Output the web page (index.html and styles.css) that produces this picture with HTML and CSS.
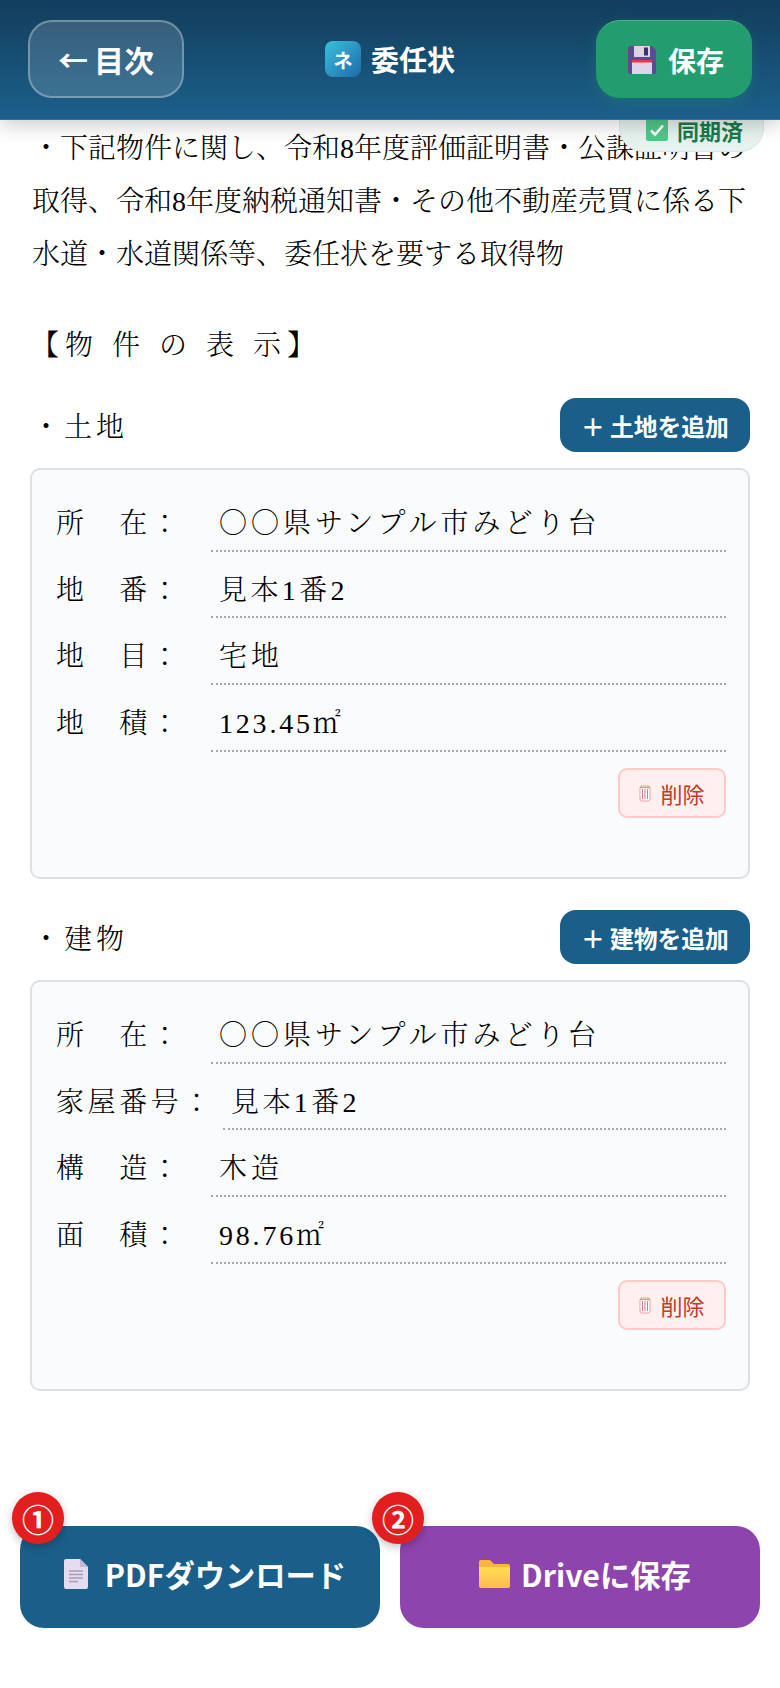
FILE: index.html
```html
<!DOCTYPE html>
<html lang="ja">
<head>
<meta charset="utf-8">
<title>委任状</title>
<link rel="stylesheet" href="styles.css">
</head>
<body>
<header class="topbar">
  <button class="back-btn"><span>←</span>目次</button>
  <div class="title">
    <span class="logo"><svg viewBox="0 0 36 36" width="36" height="36"><defs><linearGradient id="lg" x1="0" y1="0" x2="1" y2="1"><stop offset="0" stop-color="#3cc0dc"/><stop offset="1" stop-color="#1d6aa8"/></linearGradient></defs><rect width="36" height="36" rx="8" fill="url(#lg)"/></svg><span class="logo-mark">ネ</span></span>
    <span>委任状</span>
  </div>
  <button class="save-btn">
    <svg class="floppy" viewBox="0 0 28 28" width="28" height="28"><path d="M2 0h22l4 4v22a2 2 0 0 1-2 2H2a2 2 0 0 1-2-2V2a2 2 0 0 1 2-2z" fill="#5c4a94"/><rect x="6" y="0" width="16" height="11" fill="#d9d4e6"/><rect x="16" y="1.500" width="4" height="8" fill="#3d3268"/><rect x="4" y="14" width="20" height="14" fill="#e0d4ea"/><rect x="4" y="14" width="20" height="2.500" fill="#e8344e"/></svg>
    保存
  </button>
</header>
<div class="sync-badge">
  <svg viewBox="0 0 22 22" width="22" height="22"><rect width="22" height="22" rx="2" fill="#52c78a"/><path d="M5 11.500l4 4 8-9" fill="none" stroke="#fff" stroke-width="2.600"/></svg>
  同期済
</div>
<main class="doc">
  <p class="intro">・下記物件に関し、令和8年度評価証明書・公課証明書の取得、令和8年度納税通知書・その他不動産売買に係る下水道・水道関係等、委任状を要する取得物</p>
  <h2 class="heading">【物 件 の 表 示】</h2>

  <section class="group">
    <div class="group-head">
      <span class="group-name">・土地</span>
      <button class="add-btn"><span class="plus">＋</span>土地を追加</button>
    </div>
    <div class="card">
      <div class="row"><span class="label">所　在：</span><span class="value"><span class="maru">○○</span>県サンプル市みどり台</span></div>
      <div class="row"><span class="label">地　番：</span><span class="value mixed">見本1番2</span></div>
      <div class="row"><span class="label">地　目：</span><span class="value">宅地</span></div>
      <div class="row"><span class="label">地　積：</span><span class="value numeric">123.45㎡</span></div>
      <div class="card-foot">
        <button class="del-btn"><svg viewBox="0 0 12 18" width="12" height="18"><rect x="1" y="2" width="10" height="15" rx="2" fill="#fff" stroke="#e8a0a0"/><path d="M3.500 5v10M6 5v10M8.500 5v10" stroke="#d07a8a"/><path d="M1 3.500h10" stroke="#e0a060" stroke-width="1.500"/></svg>削除</button>
      </div>
    </div>
  </section>

  <section class="group">
    <div class="group-head">
      <span class="group-name">・建物</span>
      <button class="add-btn"><span class="plus">＋</span>建物を追加</button>
    </div>
    <div class="card">
      <div class="row"><span class="label">所　在：</span><span class="value"><span class="maru">○○</span>県サンプル市みどり台</span></div>
      <div class="row"><span class="label">家屋番号：</span><span class="value mixed">見本1番2</span></div>
      <div class="row"><span class="label">構　造：</span><span class="value">木造</span></div>
      <div class="row"><span class="label">面　積：</span><span class="value numeric">98.76㎡</span></div>
      <div class="card-foot">
        <button class="del-btn"><svg viewBox="0 0 12 18" width="12" height="18"><rect x="1" y="2" width="10" height="15" rx="2" fill="#fff" stroke="#e8a0a0"/><path d="M3.500 5v10M6 5v10M8.500 5v10" stroke="#d07a8a"/><path d="M1 3.500h10" stroke="#e0a060" stroke-width="1.500"/></svg>削除</button>
      </div>
    </div>
  </section>
</main>
<footer class="actions">
  <button class="action pdf"><span class="badge badge-one">①</span>
    <svg viewBox="0 0 24 30" width="24" height="30"><path d="M2 0h14l8 8v20a2 2 0 0 1-2 2H2a2 2 0 0 1-2-2V2a2 2 0 0 1 2-2z" fill="#e4ddf0"/><path d="M16 0l8 8h-8z" fill="#c4b9d6"/><path d="M5 12h14M5 15.500h14M5 19h14M5 22.500h9" stroke="#a79db8" stroke-width="1.500"/></svg>
    PDFダウンロード</button>
  <button class="action drive"><span class="badge badge-two">②</span>
    <svg viewBox="0 0 31 28" width="31" height="28"><defs><linearGradient id="fg" x1="0" y1="0" x2="0" y2="1"><stop offset="0" stop-color="#ffdf50"/><stop offset="1" stop-color="#ffb950"/></linearGradient></defs><path d="M2 0h9l4 4h14a2 2 0 0 1 2 2v4H0V2a2 2 0 0 1 2-2z" fill="#ffb53c"/><path d="M0 7h31v19a2 2 0 0 1-2 2H2a2 2 0 0 1-2-2z" fill="url(#fg)"/></svg>
    Driveに保存</button>
</footer>
</body>
</html>
```
FILE: styles.css
```css
* { box-sizing: border-box; }
html, body { margin: 0; padding: 0; background: #fff; }
body {
  position: relative;
  width: 780px;
  height: 1688px;
  overflow: hidden;
  font-family: "Liberation Serif", "Noto Serif CJK JP", "Noto Sans CJK JP", serif;
  font-weight: 300;
  color: #000;
}
button { font-family: "Noto Sans CJK JP", sans-serif; cursor: pointer; }

.topbar {
  position: relative;
  z-index: 3;
  height: 120px;
  padding: 20px 28px 21px 28px;
  display: flex;
  align-items: stretch;
  justify-content: space-between;
  background: linear-gradient(180deg, #123d5c 0%, #1c608b 100%);
  border-bottom: 1px solid #2f6f98;
  box-shadow: 0 4px 20px rgba(0, 0, 0, .22);
}
.back-btn {
  width: 156px;
  padding: 0;
  display: flex;
  align-items: center;
  justify-content: center;
  gap: 6px;
  color: #fff;
  font-size: 30px;
  font-weight: 700;
  background: rgba(255, 255, 255, .15);
  border: 2px solid rgba(255, 255, 255, .3);
  border-radius: 24px;
}
.title {
  display: flex;
  align-items: center;
  gap: 10px;
  color: #fff;
  font-family: "Noto Sans CJK JP", sans-serif;
  font-size: 28px;
  font-weight: 700;
}
.logo { position: relative; display: block; width: 36px; height: 36px; }
.logo svg { display: block; }
.logo-mark {
  position: absolute;
  inset: 0;
  display: flex;
  align-items: center;
  justify-content: center;
  font-size: 19px;
  line-height: 1;
}
.save-btn {
  width: 156px;
  padding: 0 0 0 4px;
  display: flex;
  align-items: center;
  justify-content: center;
  gap: 12px;
  color: #fff;
  font-size: 28px;
  font-weight: 700;
  background: #239d6d;
  border: 0;
  border-top: 1px solid #4cb48c;
  border-radius: 24px;
  box-shadow: 0 4px 14px rgba(35, 157, 109, .3);
}
.sync-badge {
  position: absolute;
  z-index: 2;
  top: 100px;
  left: 619px;
  width: 145px;
  height: 52px;
  padding: 8px 0 0 6px;
  display: flex;
  align-items: center;
  justify-content: center;
  gap: 9px;
  color: #1a7a4c;
  font-family: "Noto Sans CJK JP", sans-serif;
  font-size: 22px;
  font-weight: 700;
  background: #e6f3ee;
  border: 1px solid #dfe4ec;
  border-radius: 24px;
}

.doc { padding: 0 30px; }
.intro {
  margin: 0 0 0 2px;
  padding-top: 2px;
  width: 722px;
  font-size: 28px;
  line-height: 53px;
  height: 161px;
  overflow: hidden;
}
.heading {
  margin: 38px 0 0 1px;
  font-size: 28px;
  font-weight: 300;
  line-height: 53px;
  letter-spacing: 6px;
  white-space: nowrap;
}
.group { margin-top: 31px; }
.heading + .group { margin-top: 0; }
.group-head {
  height: 54px;
  margin-top: 26px;
  display: flex;
  align-items: center;
  justify-content: space-between;
}
.group-name { font-size: 28px; letter-spacing: 4px; margin-left: 2px; }
.add-btn {
  width: 190px;
  height: 54px;
  padding: 0;
  display: flex;
  align-items: center;
  justify-content: center;
  color: #fff;
  font-size: 23.800px;
  font-weight: 700;
  background: #1a5f8a;
  border: 0;
  border-radius: 16px;
}
.plus { font-size: 23.800px; margin-right: 5px; }
.card {
  margin-top: 16px;
  height: 411px;
  padding: 24px 22px 24px 24px;
  background: #fafbfd;
  border: 2px solid #dfe0e3;
  border-radius: 10px;
}
.row { display: flex; height: 57.700px; margin-bottom: 9px; }
.label {
  flex: none;
  min-width: 155px;
  padding-right: 9px;
  font-size: 28px;
  letter-spacing: 3.600px;
  line-height: 59px;
  white-space: nowrap;
}
.value {
  flex: 1;
  padding-left: 8px;
  font-size: 28px;
  letter-spacing: 4px;
  line-height: 59px;
  white-space: nowrap;
  border-bottom: 2px dotted #a8a8a8;
}
.mixed { letter-spacing: 3.400px; }
.numeric { letter-spacing: 2.800px; }
.maru { font-family: "Noto Sans CJK JP", sans-serif; line-height: 0; }
.card-foot { display: flex; justify-content: flex-end; margin-top: 16px; }
.del-btn {
  width: 108px;
  height: 50px;
  padding: 0;
  display: flex;
  align-items: center;
  justify-content: center;
  gap: 9px;
  color: #c0392b;
  font-size: 22px;
  background: #fff0f0;
  border: 2px solid #ffcaca;
  border-radius: 9px;
}

.actions {
  position: absolute;
  left: 20px;
  top: 1526px;
  width: 740px;
  display: flex;
  gap: 20px;
}
.action {
  position: relative;
  flex: 1;
  height: 102px;
  padding: 0 0 6px 10px;
  display: flex;
  align-items: center;
  justify-content: center;
  color: #fff;
  font-size: 30.300px;
  font-weight: 700;
  border: 0;
  border-radius: 24px;
}
.pdf { background: #1a5f8a; gap: 17px; }
.drive { background: #8e44ad; gap: 11px; }
.badge {
  position: absolute;
  top: -34px;
  width: 52px;
  height: 52px;
  display: flex;
  align-items: center;
  justify-content: center;
  color: #fff;
  font-size: 32px;
  line-height: 1;
  font-family: "Noto Sans CJK JP", sans-serif;
  font-weight: 700;
  background: #e21f1f;
  border-radius: 50%;
  box-shadow: 0 3px 8px rgba(0, 0, 0, .25);
}
.badge-one { left: -8px; }
.badge-two { left: -28px; }
```
